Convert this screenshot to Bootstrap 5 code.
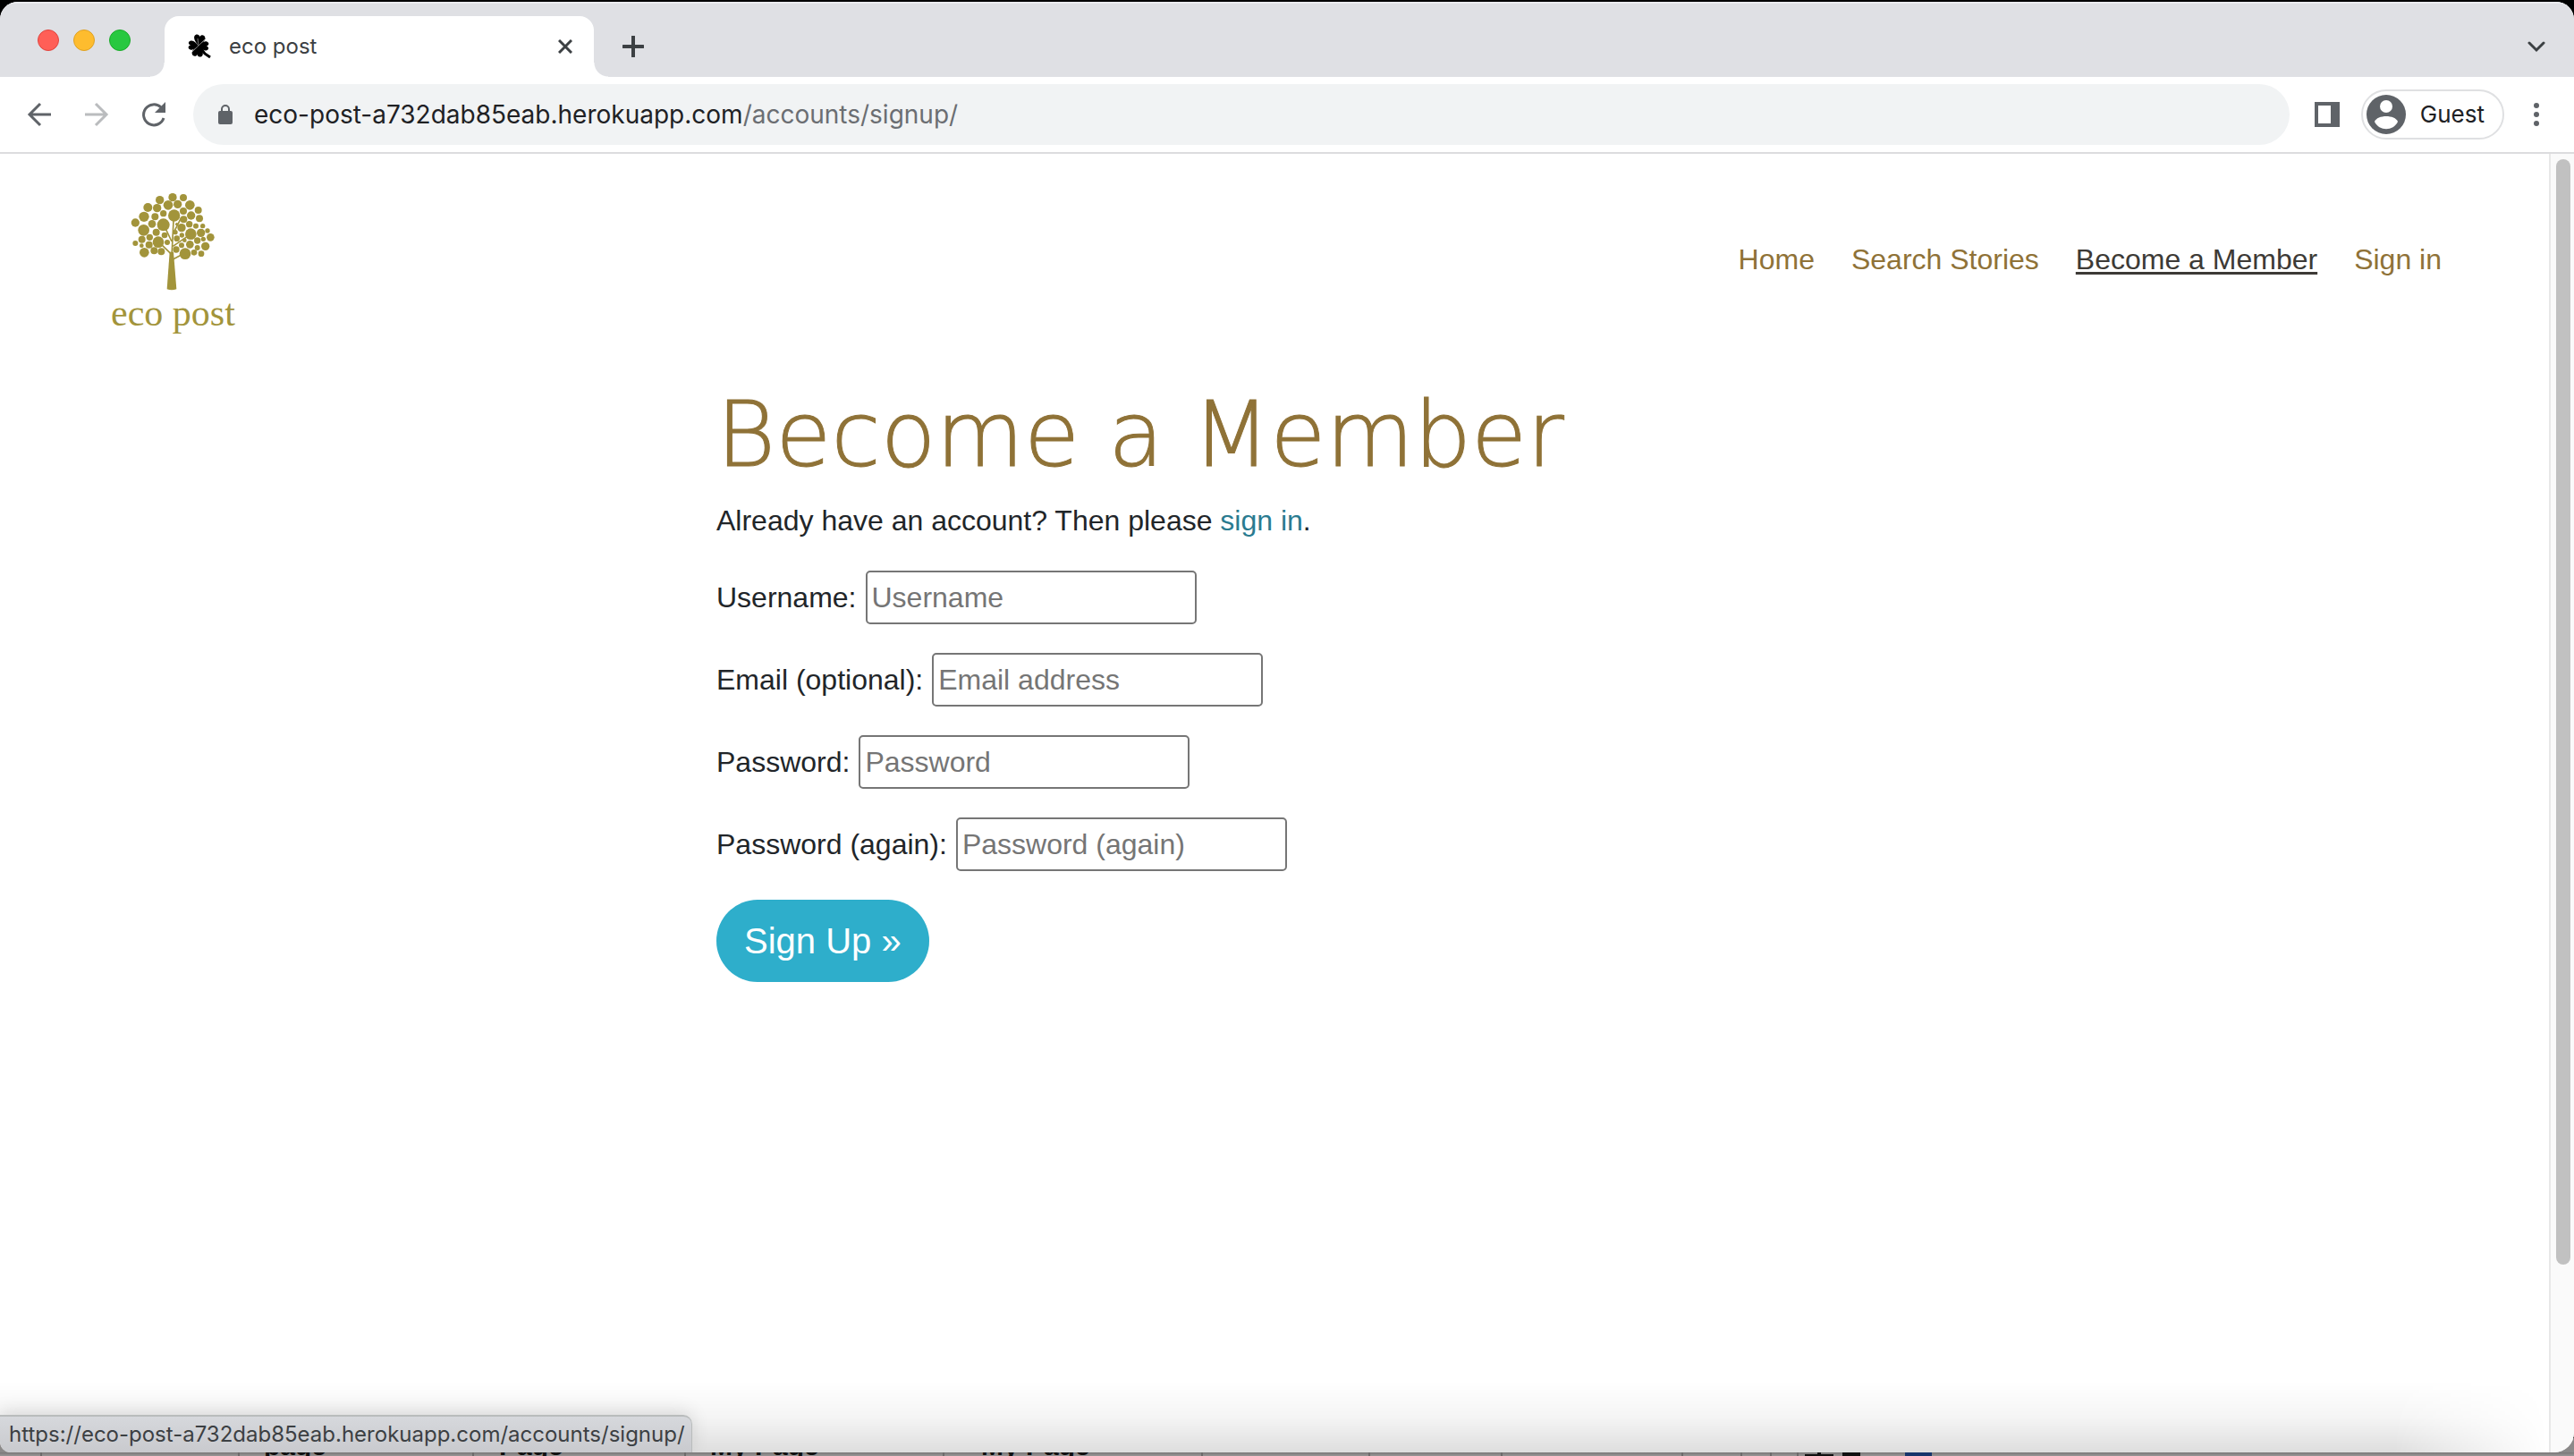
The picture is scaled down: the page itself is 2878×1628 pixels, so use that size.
<!DOCTYPE html>
<html lang="en">
<head>
<meta charset="utf-8">
<meta name="viewport" content="width=device-width, initial-scale=1">
<title>eco post</title>
<link rel="stylesheet" href="https://cdn.jsdelivr.net/npm/bootstrap@5.3.0/dist/css/bootstrap.min.css">
<script src="https://cdn.jsdelivr.net/npm/bootstrap@5.3.0/dist/js/bootstrap.bundle.min.js"></script>
<style>
  body { background: #000; font-family: "Liberation Sans", sans-serif; font-size: 32px; line-height: 48px; color: #212529; }
  .desktop { height: 100vh; padding: 2px 0 4px; }
  .desktop-strip { left: 0; right: 0; bottom: 0; height: 20px; background: linear-gradient(#8b8989 80%, #7c7a7a 82%, #999797); }
  .desktop-strip svg { left: 0; bottom: 0; }
  .browser { height: 100%; border-radius: 20px 20px 22px 12px; background: #fff; font-family: Inter, sans-serif; }
  .chrome-btn { border: 0; padding: 0; background: none; color: #5f6368; line-height: 0; }
  .tab-strip { height: 84px; background: #dfe0e4; padding: 0 32px 0 42px; box-shadow: inset 0 2px #ebecef; }
  .light { width: 24px; height: 24px; border-radius: 50%; margin-top: 2px; }
  .light-red { background: #ff5f57; border: 1px solid #e0443e; }
  .light-yellow { background: #febc2e; border: 1px solid #dea123; }
  .light-green { background: #28c840; border: 1px solid #1aab29; }
  .tab { width: 480px; height: 68px; margin: 16px 0 0 38px; padding: 0 24px 0 26px; background: #fff; border-radius: 16px 16px 0 0; font-size: 24px; color: #3c4043; }
  .tab::before, .tab::after { content: ""; position: absolute; bottom: 0; width: 16px; height: 16px; }
  .tab::before { left: -16px; background: radial-gradient(circle at 0 0, transparent 15px, #fff 16px); }
  .tab::after { right: -16px; background: radial-gradient(circle at 100% 0, transparent 15px, #fff 16px); }
  .toolbar { height: 86px; padding: 0 38px 0 28px; border-bottom: 2px solid #dcdcde; }
  .address { height: 68px; margin-left: 28px; padding: 0 28px; border-radius: 34px; background: #f1f3f4; font-size: 28px; color: #202124; }
  .address span { color: #6b6e72; }
  .guest { height: 56px; padding: 0 20px 0 4px; border: 2px solid #dfe0e2; border-radius: 28px; background: #fff; color: #202124; font-size: 26px; line-height: 40px; }
  .viewport { min-height: 0; }
  .page { font-family: "Liberation Sans", sans-serif; overflow: hidden; }
  .scroll-track { width: 28px; border-left: 2px solid #e8e8e8; background: #fafafa; padding: 6px 4px 0 6px; }
  .scroll-thumb { height: 85.5%; border-radius: 8px; background: #c1c1c1; }
  .site-header { min-height: 236px; padding: 43px 120px 0 124px; }
  .logo { color: #a2943b; font: 42px/50px "Liberation Serif", serif; text-decoration: none; }
  .site-nav { gap: 41px; padding-top: 51px; }
  .site-nav a { color: #8f7237; text-decoration: none; }
  .site-nav a.active { color: #3d3a36; text-decoration: underline; text-decoration-thickness: 3px; text-underline-offset: 3px; }
  .signup { width: 100%; max-width: 1248px; padding-top: 18px; }
  .signup h1 { margin: 0 0 12px; font: 200 101px/120px "DejaVu Sans Light", "DejaVu Sans", sans-serif; color: #8f7237; -webkit-text-stroke: 1px #8f7237; }
  .signup p { margin-bottom: 32px; }
  .signup p a { color: #2a7b90; text-decoration: none; }
  .field { gap: 10px; margin-bottom: 32px; }
  .field input { width: 370px; height: 60px; padding: 2px 5px; border: 2px solid #767676; border-radius: 5px; background: #fff; }
  .field input::placeholder { color: #757575; opacity: 1; }
  .signup-btn { padding: 16px 31px; border: 0; border-radius: 46px; background: #2eaecb; color: #fff; font-size: 40px; line-height: 60px; }
  .dock-shade { left: 0; right: 0; bottom: 0; height: 80px; background: linear-gradient(transparent, rgba(0,0,0,.04) 50%, rgba(0,0,0,.13)); -webkit-mask-image: linear-gradient(90deg, #000 93%, transparent 99%); mask-image: linear-gradient(90deg, #000 93%, transparent 99%); pointer-events: none; }
  .status { left: 0; bottom: 0; height: 42px; padding: 0 7px 0 10px; border: solid #b9bcbc; border-width: 2px 1px 0 0; border-radius: 0 10px 0 12px; background: linear-gradient(#d6d8dc, #c9cace); box-shadow: 0 -4px 20px rgba(0,0,0,.12); font-size: 24px; line-height: 40px; color: #3c4043; white-space: nowrap; }
</style>
</head>
<body>
<div class="desktop position-relative overflow-hidden">
  <div class="desktop-strip position-absolute overflow-hidden" aria-hidden="true">
    <svg class="position-absolute" width="2878" height="4" viewBox="0 0 2878 4">
      <path d="M46 0v4M267 0v4M529 0v4M766 0v4M1055 0v4M1344 0v4M1531 0v4M1679 0v4M1881 0v4M1947 0v4M1980 0v4M2010 0v4" stroke="#6d6b6b" stroke-width="2"/>
      <g font-family="Liberation Sans, sans-serif" font-weight="bold" font-size="30" fill="#111"><text x="295" y="3">page</text><text x="558" y="3">Page</text><text x="794" y="3">My Page</text><text x="1097" y="3">My Page</text></g>
      <path d="M2034 0v4M2018 4h32M2062 4V2h16v2" stroke="#111" stroke-width="4" fill="none"/>
      <path d="M2130 0h30v4h-30z" fill="#17356b"/>
    </svg>
  </div>
  <div class="browser position-relative overflow-hidden d-flex flex-column">
    <div class="tab-strip d-flex align-items-center flex-shrink-0">
      <div class="d-flex gap-3">
        <button class="light light-red p-0" aria-label="Close window"></button>
        <button class="light light-yellow p-0" aria-label="Minimise window"></button>
        <button class="light light-green p-0" aria-label="Zoom window"></button>
      </div>
      <div class="tab position-relative d-flex align-items-center">
        <svg width="26" height="28" viewBox="0 0 26 28" aria-hidden="true">
          <g transform="rotate(8 12 13)">
          <path d="M12 13C9 10 5 7 6 3C7 0 11 0 12 3C13 0 17 0 18 3C19 7 15 10 12 13Z"/>
          <path d="M12 13C9 10 6 7 7 4C8 1 11 1 12 4C13 1 16 1 17 4C18 7 15 10 12 13Z" transform="rotate(85 12 13)"/>
          <path d="M12 13C9 10 5 7 6 3C7 0 11 0 12 3C13 0 17 0 18 3C19 7 15 10 12 13Z" transform="rotate(180 12 13)"/>
          <path d="M12 13C9 10 6 7 7 4C8 1 11 1 12 4C13 1 16 1 17 4C18 7 15 10 12 13Z" transform="rotate(265 12 13)"/>
          </g>
          <path d="M12 13L19 22L25 26" stroke="#000" stroke-width="3" fill="none"/>
          <path d="M11 5L12 13L20 5M12 13L5 20" stroke="#777" stroke-width="1" fill="none"/>
        </svg>
        <span class="ms-3 ps-1 flex-grow-1">eco post</span>
        <button class="chrome-btn" aria-label="Close tab"><svg width="16" height="16" viewBox="0 0 16 16"><path d="M1 1l14 14M15 1L1 15" stroke="#3c4043" stroke-width="3"/></svg></button>
      </div>
      <button class="chrome-btn ms-4 ps-2 mt-3" aria-label="New tab"><svg width="24" height="24" viewBox="0 0 24 24"><path d="M12 1v22M1 12h22" stroke="#3c4043" stroke-width="4" stroke-linecap="round"/></svg></button>
      <button class="chrome-btn ms-auto mt-3" aria-label="Search tabs"><svg width="20" height="14" viewBox="0 0 20 14"><path d="M2 3l8 8 8-8" stroke="#3c4043" stroke-width="3" fill="none" stroke-linecap="round"/></svg></button>
    </div>
    <div class="toolbar d-flex align-items-center flex-shrink-0">
      <button class="chrome-btn" aria-label="Back"><svg width="32" height="32" viewBox="0 0 32 32" fill="none" stroke="#5f6368" stroke-width="3"><path d="M29 16H5M17 4L5 16l12 12"/></svg></button>
      <button class="chrome-btn mx-4 px-2" aria-label="Forward"><svg width="32" height="32" viewBox="0 0 32 32" fill="none" stroke="#babcbe" stroke-width="3"><path d="M3 16h24M15 4l12 12-12 12"/></svg></button>
      <button class="chrome-btn" aria-label="Reload"><svg width="32" height="32" viewBox="0 0 32 32"><path d="M27 20A11.500 11.500 0 1 1 24 8" fill="none" stroke="#5f6368" stroke-width="3"/><path d="M29 2v12H17z" fill="#5f6368"/></svg></button>
      <div class="address d-flex align-items-center flex-grow-1">
        <svg class="me-4" width="16" height="22" viewBox="0 0 16 22" aria-hidden="true"><rect y="7" width="16" height="15" rx="2" fill="#5f6368"/><path d="M4 8V5a4 4 0 0 1 8 0v3" fill="none" stroke="#5f6368" stroke-width="2"/></svg>
        <div>eco-post-a732dab85eab.herokuapp.com<span>/accounts/signup/</span></div>
      </div>
      <button class="chrome-btn ms-4 ps-1" aria-label="Side panel"><svg width="28" height="28" viewBox="0 0 28 28"><path fill="#5f6368" fill-rule="evenodd" d="M0 0h28v28H0zM4 4v20h14V4z"/></svg></button>
      <button class="guest d-flex align-items-center gap-3 mx-4"><svg width="44" height="44" viewBox="0 0 44 44" aria-hidden="true"><circle cx="22" cy="22" r="22" fill="#5f6368"/><circle cx="22" cy="13" r="7" fill="#fff"/><path d="M9 30c3-8 23-8 26 0c-5 11-21 11-26 0z" fill="#fff"/></svg><span>Guest</span></button>
      <button class="chrome-btn ps-2" aria-label="Menu"><svg width="8" height="28" viewBox="0 0 8 28" fill="#5f6368"><circle cx="4" cy="4" r="3"/><circle cx="4" cy="14" r="3"/><circle cx="4" cy="24" r="3"/></svg></button>
    </div>
    <div class="viewport d-flex flex-grow-1">
      <div class="page flex-grow-1">
        <header class="site-header d-flex justify-content-between align-items-start">
          <a class="logo d-flex flex-column align-items-center" href="#">
            <svg width="94" height="110" viewBox="142 75 282 330" fill="#a2943b" aria-hidden="true">
              <path d="M273 275L264 400Q280 406 296 400L286 275Z"/>
              <path d="M280 290L286 170M280 240L256 190M280 284L240 245M284 256L340 218M284 300L325 278M284 215L312 160" stroke="#a2943b" stroke-width="5" fill="none"/>
              <circle cx="283" cy="92" r="14"/><circle cx="319" cy="93" r="12"/><circle cx="240" cy="101" r="14"/><circle cx="200" cy="126" r="15"/><circle cx="231" cy="128" r="14"/><circle cx="268" cy="118" r="16"/><circle cx="300" cy="115" r="14"/><circle cx="341" cy="118" r="16"/><circle cx="369" cy="135" r="12"/><circle cx="319" cy="138" r="12"/><circle cx="345" cy="153" r="14"/><circle cx="373" cy="163" r="12"/><circle cx="288" cy="153" r="20"/><circle cx="252" cy="146" r="11"/><circle cx="224" cy="157" r="12"/><circle cx="187" cy="157" r="17"/><circle cx="158" cy="177" r="14"/><circle cx="214" cy="181" r="13"/><circle cx="252" cy="184" r="21"/><circle cx="186" cy="202" r="19"/><circle cx="228" cy="209" r="12"/><circle cx="256" cy="219" r="10"/><circle cx="206" cy="226" r="11"/><circle cx="180" cy="233" r="12"/><circle cx="158" cy="246" r="9"/><circle cx="179" cy="254" r="7"/><circle cx="204" cy="251" r="12"/><circle cx="235" cy="242" r="19"/><circle cx="265" cy="243" r="9"/><circle cx="188" cy="277" r="16"/><circle cx="221" cy="271" r="12"/><circle cx="245" cy="274" r="12"/><circle cx="320" cy="166" r="12"/><circle cx="339" cy="182" r="11"/><circle cx="361" cy="188" r="9"/><circle cx="384" cy="188" r="8"/><circle cx="313" cy="194" r="14"/><circle cx="297" cy="182" r="5"/><circle cx="400" cy="204" r="8"/><circle cx="378" cy="211" r="14"/><circle cx="410" cy="226" r="13"/><circle cx="344" cy="215" r="19"/><circle cx="292" cy="209" r="8"/><circle cx="314" cy="219" r="8"/><circle cx="297" cy="230" r="10"/><circle cx="323" cy="236" r="7"/><circle cx="366" cy="237" r="11"/><circle cx="386" cy="232" r="8"/><circle cx="341" cy="250" r="13"/><circle cx="313" cy="253" r="9"/><circle cx="295" cy="267" r="11"/><circle cx="366" cy="261" r="9"/><circle cx="393" cy="256" r="14"/><circle cx="325" cy="281" r="19"/><circle cx="355" cy="277" r="10"/><circle cx="379" cy="281" r="10"/>
            </svg>
            <span>eco post</span>
          </a>
          <nav class="site-nav d-flex">
            <a href="#">Home</a><a href="#">Search Stories</a><a class="active" href="#">Become a Member</a><a href="#">Sign in</a>
          </nav>
        </header>
        <main class="signup mx-auto">
          <h1>Become a Member</h1>
          <p>Already have an account? Then please <a href="#">sign in</a>.</p>
          <form>
            <div class="field d-flex align-items-center"><label for="username">Username:</label><input id="username" type="text" placeholder="Username"></div>
            <div class="field d-flex align-items-center"><label for="email">Email (optional):</label><input id="email" type="email" placeholder="Email address"></div>
            <div class="field d-flex align-items-center"><label for="password1">Password:</label><input id="password1" type="password" placeholder="Password"></div>
            <div class="field d-flex align-items-center"><label for="password2">Password (again):</label><input id="password2" type="password" placeholder="Password (again)"></div>
            <button class="signup-btn" type="button">Sign Up »</button>
          </form>
        </main>
      </div>
      <div class="scroll-track flex-shrink-0"><div class="scroll-thumb"></div></div>
    </div>
    <div class="dock-shade position-absolute"></div>
    <div class="status position-absolute">https://eco-post-a732dab85eab.herokuapp.com/accounts/signup/</div>
  </div>
</div>
</body>
</html>
